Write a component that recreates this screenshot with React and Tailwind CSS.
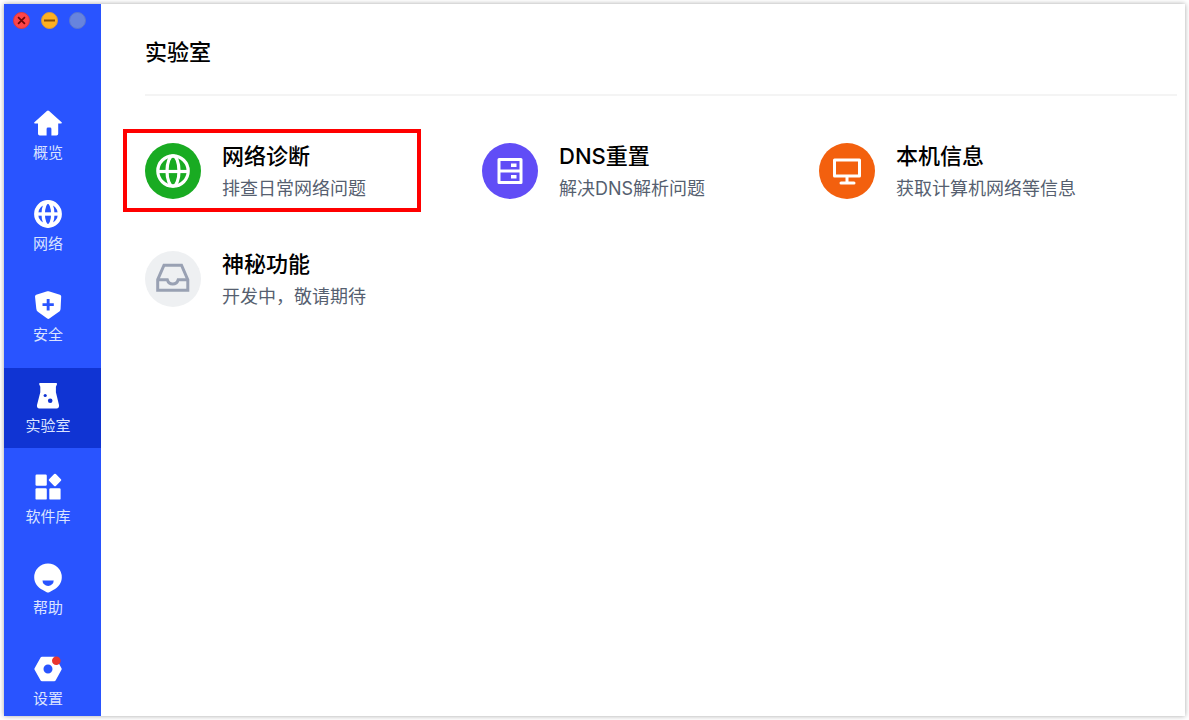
import clsx from "clsx";

const HomeIcon = () => (
    <svg viewBox="0 0 28 28" className="h-7 w-7" fill="currentColor" aria-hidden="true">
        <path d="M12.9 2.1a1.6 1.6 0 0 1 2.2 0l12.500 11.100c.5.5.2 1.300-.5 1.300h-2.900v10.300a1.800 1.800 0 0 1-1.800 1.800h-5v-6.700a1.400 1.400 0 0 0-1.400-1.400h-2a1.400 1.400 0 0 0-1.400 1.400v6.700H5.800A1.800 1.800 0 0 1 4 24.800V14.500H.9c-.7 0-1-.8-.5-1.300z" />
    </svg>
);

const GlobeIcon = () => (
    <svg viewBox="0 0 28 28" className="h-7 w-7" fill="none" stroke="currentColor" aria-hidden="true">
        <circle cx="14" cy="14" r="11.900" strokeWidth="4" />
        <ellipse cx="14" cy="14" rx="4.800" ry="12" strokeWidth="3.400" />
        <path d="M2 14h24" strokeWidth="3.400" />
    </svg>
);

const ShieldIcon = () => (
    <svg viewBox="0 0 28 28" className="h-7 w-7" fill="currentColor" aria-hidden="true">
        <path fillRule="evenodd" d="M13.300.3a2 2 0 0 1 1.400 0l11.200 3.500c.8.300 1.300.900 1.300 1.700l-.6 12.300c-.1 1.400-.8 2.600-2 3.300l-9.200 6.500a2 2 0 0 1-2.200 0l-9-6.500a4.200 4.200 0 0 1-1.900-3.300L1 5.500c0-.8.400-1.400 1.200-1.700zM12.700 8v4.200H8.500v2.900h4.200v4.300h2.900v-4.300h4.200v-2.900h-4.200V8z" />
    </svg>
);

const FlaskIcon = () => (
    <svg viewBox="0 0 28 28" className="h-7 w-7" aria-hidden="true">
        <path fill="currentColor" d="M6 1h16.200c.8 0 1.100.9.700 1.600l-1 2.100v5.600l3.100 12.800c.4 1.900-.6 3.400-2.400 3.400H5.400c-1.800 0-2.800-1.500-2.400-3.400l3.300-12.800V4.700L5.300 2.600C5 1.900 5.200 1 6 1z" />
        <circle cx="11.200" cy="13.500" r="1.600" fill="#1034d3" />
        <circle cx="16.200" cy="18.700" r="2.300" fill="#1034d3" />
    </svg>
);

const AppsIcon = () => (
    <svg viewBox="0 0 28 28" className="h-7 w-7" fill="currentColor" aria-hidden="true">
        <rect x="1.500" y="1.500" width="11.300" height="11.300" rx="1.200" />
        <rect x="1.500" y="15.300" width="11.300" height="11.300" rx="1.200" />
        <rect x="15.300" y="15.300" width="11.300" height="11.300" rx="1.200" />
        <rect x="16.200" y="2.200" width="9.600" height="9.600" rx="1.200" transform="rotate(45 21 7)" />
    </svg>
);

const HelpIcon = () => (
    <svg viewBox="0 0 28 30" className="h-[30px] w-7" fill="currentColor" aria-hidden="true">
        <path fillRule="evenodd" d="M14 .5a13.800 13.800 0 0 1 13.800 13.800c0 5.700-3.300 10.200-8.600 12.800l-3.900 2.100c-.9.500-1.700.5-2.600 0l-3.900-2.100C3.500 24.500.2 20 .2 14.300A13.800 13.800 0 0 1 14 .5zM8.500 17.400a5.600 5.600 0 0 0 11.200 0z" />
    </svg>
);

const SettingsIcon = () => (
    <svg viewBox="0 0 28 28" className="h-7 w-7" aria-hidden="true">
        <path fill="currentColor" fillRule="evenodd" d="M8 1.800h12.200c.6 0 1.100.3 1.400.8l5.900 10.600c.3.500.3 1.100 0 1.600l-5.900 10.600c-.3.500-.8.800-1.400.8H8c-.6 0-1.100-.3-1.400-.8L.6 14.800c-.3-.5-.3-1.100 0-1.600L6.600 2.600c.3-.5.8-.8 1.400-.8zM14 9.500a4.500 4.500 0 1 0 0 9 4.500 4.500 0 0 0 0-9z" />
        <circle cx="22.300" cy="5.700" r="4.300" fill="#e8352e" />
    </svg>
);

const DiagnoseIcon = () => (
    <svg viewBox="0 0 36 36" className="h-9 w-9" fill="none" stroke="currentColor" strokeWidth="3.200" aria-hidden="true">
        <circle cx="18" cy="18" r="15.200" />
        <ellipse cx="18" cy="18" rx="6" ry="15.200" />
        <path d="M3 18.500h30" />
    </svg>
);

const ServerIcon = () => (
    <svg viewBox="0 0 36 36" className="h-9 w-9" fill="none" stroke="currentColor" strokeWidth="3" strokeLinejoin="round" aria-hidden="true">
        <rect x="7" y="6.500" width="22" height="23" />
        <path d="M7 18h22" />
        <rect x="19" y="10.500" width="5.500" height="3.500" fill="currentColor" stroke="none" />
        <rect x="19" y="22" width="5.500" height="3.500" fill="currentColor" stroke="none" />
    </svg>
);

const MonitorIcon = () => (
    <svg viewBox="0 0 36 36" className="h-9 w-9" fill="none" stroke="currentColor" strokeWidth="3" strokeLinecap="round" strokeLinejoin="round" aria-hidden="true">
        <rect x="5.500" y="7" width="25" height="16" />
        <path d="M18 24v6M12 30h13" />
    </svg>
);

const InboxIcon = () => (
    <svg viewBox="0 0 36 36" className="h-9 w-9" fill="none" stroke="currentColor" strokeWidth="3" aria-hidden="true">
        <path d="M2.700 18.700 9 4.200h17.500l6.300 14.500v10.500H2.700z" />
        <path d="M2.700 18.700h9.600c.8 2.600 2.700 4.300 5.400 4.300s4.700-1.700 5.500-4.300h9.600" />
    </svg>
);

const navItems = [
    { label: "概览", icon: HomeIcon },
    { label: "网络", icon: GlobeIcon },
    { label: "安全", icon: ShieldIcon },
    { label: "实验室", icon: FlaskIcon, active: true },
    { label: "软件库", icon: AppsIcon },
    { label: "帮助", icon: HelpIcon },
    { label: "设置", icon: SettingsIcon },
];

const tools = [
    { title: "网络诊断", desc: "排查日常网络问题", icon: DiagnoseIcon, color: "bg-[#19ab22] text-white", marked: true },
    { title: "DNS重置", desc: "解决DNS解析问题", icon: ServerIcon, color: "bg-[#614df6] text-white" },
    { title: "本机信息", desc: "获取计算机网络等信息", icon: MonitorIcon, color: "bg-[#f3600e] text-white" },
    { title: "神秘功能", desc: "开发中，敬请期待", icon: InboxIcon, color: "bg-[#eef0f2] text-[#99a1b3]" },
];

function WindowButtons() {
    return (
        <div className="flex gap-[11px] pt-2 pl-[9px]">
            <button type="button" aria-label="关闭" className="flex h-[17px] w-[17px] items-center justify-center rounded-full border border-[#dc3a3c] bg-[#fe4549] text-[#6d0508]">
                <svg viewBox="0 0 10 10" className="h-[9px] w-[9px]" stroke="currentColor" strokeWidth="1.900" aria-hidden="true">
                    <path d="M1.200 1.200l7.600 7.600M8.800 1.200 1.200 8.800" />
                </svg>
            </button>
            <button type="button" aria-label="最小化" className="flex h-[17px] w-[17px] items-center justify-center rounded-full border border-[#d8993a] bg-[#fdb022] text-[#8a4d05]">
                <svg viewBox="0 0 11 9" className="h-[9px] w-[11px] shrink-0" stroke="currentColor" strokeWidth="2" aria-hidden="true">
                    <path d="M0 4.500h11" />
                </svg>
            </button>
            <button type="button" aria-label="最大化" disabled className="h-[17px] w-[17px] rounded-full border border-[#5b76cd] bg-[#6784de]" />
        </div>
    );
}

function NavItem({ item }) {
    const Icon = item.icon;
    return (
        <a
            href="#"
            aria-current={item.active ? "page" : undefined}
            className={clsx("flex h-20 flex-col items-center pt-[14px] pr-[9px] last:h-auto last:pb-[7px]", item.active && "bg-[#1034d3]")}
        >
            <span className="flex h-7 items-center text-white">
                <Icon />
            </span>
            <span className="mt-1.5 text-[15px] leading-5 text-[#dbe3ff]">{item.label}</span>
        </a>
    );
}

function ToolCard({ tool }) {
    const Icon = tool.icon;
    return (
        <button type="button" className="relative flex items-start gap-[21px] text-left">
            {tool.marked && <span className="absolute -top-[14px] -left-[22px] h-[83px] w-[298px] border-4 border-[#ff0000]" />}
            <span className={clsx("flex h-14 w-14 shrink-0 items-center justify-center rounded-full", tool.color)}>
                <Icon />
            </span>
            <span className="flex flex-col">
                <span className="text-[22px] leading-[26px] font-medium text-black">{tool.title}</span>
                <span className="mt-2 text-[18px] leading-6 text-[#565f70]">{tool.desc}</span>
            </span>
        </button>
    );
}

export default function App() {
    return (
        <div className="min-h-screen bg-white p-1 font-['Inter','Noto_Sans_CJK_SC',sans-serif]">
            <div className="flex min-h-[calc(100vh-8px)] bg-white shadow-[0_0_5px_rgba(0,0,0,0.35)]">
                <aside className="w-[97px] shrink-0 bg-[#2954ff]">
                    <WindowButtons />
                    <nav className="mt-[66px] flex flex-col gap-[11px]">
                        {navItems.map((item) => (
                            <NavItem key={item.label} item={item} />
                        ))}
                    </nav>
                </aside>
                <main className="min-w-0 flex-1 pr-2 pl-11">
                    <h1 className="border-b-2 border-[#f4f4f4] pt-8 pb-[26px] text-[22px] leading-8 font-medium text-black">实验室</h1>
                    <div className="mt-[47px] mr-[21px] grid grid-cols-3 gap-y-[50px]">
                        {tools.map((tool) => (
                            <ToolCard key={tool.title} tool={tool} />
                        ))}
                    </div>
                </main>
            </div>
        </div>
    );
}
